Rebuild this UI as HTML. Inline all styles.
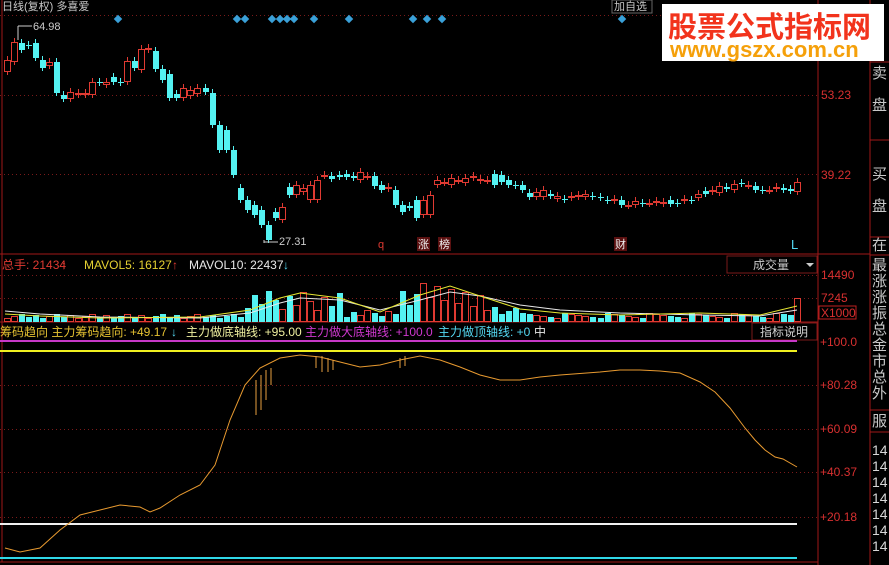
<!DOCTYPE html>
<html><head><meta charset="utf-8"><style>
html,body{margin:0;padding:0;background:#000;width:889px;height:565px;overflow:hidden}
body{font-family:"Liberation Sans","Noto Sans CJK SC",sans-serif}
svg{position:absolute;left:0;top:0}
.t{font-family:"Liberation Sans","Noto Sans CJK SC",sans-serif;font-size:12px}
#logo{position:absolute;left:662px;top:4px;width:222px;height:57px;background:#fff}
#logo .a{position:absolute;left:6px;top:0;font:bold 29px "Noto Sans CJK SC",sans-serif;color:#f2331c;letter-spacing:0px;white-space:nowrap}
#logo .b{position:absolute;left:8px;top:33px;font:bold 22px "Liberation Sans",sans-serif;color:#f5a00a;white-space:nowrap}
</style></head><body>
<svg id="s" width="889" height="565" xmlns="http://www.w3.org/2000/svg"></svg>
<div id="logo"><div class="a">股票公式指标网</div><div class="b">www.gszx.com.cn</div></div>
<script>
var s=document.getElementById('s'),h='';
function L(x1,y1,x2,y2,c,w,d){h+='<line x1="'+x1+'" y1="'+y1+'" x2="'+x2+'" y2="'+y2+'" stroke="'+c+'" stroke-width="'+(w||1)+'"'+(d?' stroke-dasharray="'+d+'"':'')+'/>';}
function T(x,y,t,c,sz,a){h+='<text x="'+x+'" y="'+y+'" fill="'+c+'" class="t" style="font-size:'+(sz||12)+'px"'+(a?' text-anchor="'+a+'"':'')+'>'+t+'</text>';}
function R(x,y,w,hh,f,st){h+='<rect x="'+x+'" y="'+y+'" width="'+w+'" height="'+hh+'" fill="'+f+'"'+(st?' stroke="'+st+'"':'')+'/>';}
var red='#c8302a';
// frame lines
L(818,0,818,565,'#a01818');L(870,0,870,565,'#a01818');
L(0,254,870,254,'#a01818');L(0,322,818,322,'#a01818');L(0,562,818,562,'#a01818');L(2,0,2,562,'#a01818');
L(870,62,889,62,'#a01818');L(870,140,889,140,'#a01818');L(870,237,889,237,'#a01818');L(870,255,889,255,'#a01818');L(870,410,889,410,'#a01818');L(870,432,889,432,'#a01818');
// grid dotted
[15,95,174].forEach(function(y){L(0,y+.5,818,y+.5,'#7a1a1a',1,'1,3');});
[275,298].forEach(function(y){L(0,y+.5,818,y+.5,'#7a1a1a',1,'1,3');});
[385,429,472,517].forEach(function(y){L(0,y+.5,818,y+.5,'#7a1a1a',1,'1,3');});
// header
T(2,10,'日线(复权) 多喜爱','#c8c8c8',11);
R(612,0,40,13,'#000','#666');T(614,10,'加自选','#c8c8c8',11);
// diamonds
[118,237,245,272,280,287,294,314,349,413,427,442,622].forEach(function(x){h+='<rect x="'+(x-3)+'" y="16" width="6" height="6" fill="#3aa0d8" transform="rotate(45 '+x+' 19)"/>';});
// candles [top,bottom,type]
var c=[[60,72,'r'],[42,62,'r'],[43,50,'c'],[45,46,'c'],[43,58,'c'],[60,68,'c'],[62,66,'r'],[62,93,'c'],[95,99,'c'],[92,99,'r'],[93,95,'r'],[93,95,'r'],[82,95,'r'],[82,83,'c'],[82,85,'r'],[77,82,'c'],[82,83,'c'],[61,82,'r'],[61,68,'c'],[49,70,'r'],[48,50,'r'],[51,69,'c'],[69,80,'c'],[74,98,'c'],[94,98,'c'],[88,98,'r'],[90,96,'r'],[88,94,'r'],[88,92,'c'],[93,125,'c'],[125,150,'c'],[130,150,'c'],[150,175,'c'],[188,200,'c'],[200,210,'c'],[205,215,'c'],[210,225,'c'],[225,240,'c'],[212,218,'c'],[207,220,'r'],[187,195,'c'],[185,195,'r'],[188,192,'r'],[185,200,'r'],[180,200,'r'],[175,176,'r'],[176,179,'c'],[175,177,'c'],[174,177,'c'],[176,178,'c'],[172,180,'r'],[176,177,'r'],[176,186,'c'],[185,190,'c'],[187,189,'r'],[190,205,'c'],[205,212,'c'],[206,208,'c'],[200,218,'c'],[200,215,'r'],[195,215,'r'],[180,185,'r'],[182,183,'r'],[178,185,'r'],[180,181,'r'],[178,183,'r'],[176,178,'r'],[179,181,'r'],[180,181,'r'],[174,185,'c'],[175,182,'c'],[180,185,'c'],[185,186,'c'],[185,190,'c'],[193,197,'c'],[192,197,'r'],[190,197,'r'],[194,196,'c'],[196,199,'r'],[199,200,'c'],[196,198,'r'],[195,197,'r'],[194,197,'r'],[196,197,'c'],[197,198,'c'],[200,201,'c'],[199,201,'r'],[200,205,'c'],[205,206,'r'],[201,205,'r'],[203,204,'c'],[203,204,'r'],[201,203,'r'],[202,204,'r'],[200,204,'c'],[203,204,'c'],[199,201,'r'],[200,201,'c'],[194,198,'r'],[191,194,'c'],[190,192,'r'],[186,193,'r'],[187,189,'c'],[184,190,'r'],[183,184,'c'],[185,186,'r'],[186,190,'c'],[190,191,'c'],[190,191,'r'],[187,189,'r'],[188,190,'c'],[189,191,'c'],[182,192,'r']];
var n=c.length,dx=(797-7)/(n-1);
c.forEach(function(d,i){var x=Math.round(7+i*dx),col=d[2]=='r'?'#e03a32':'#54f2f2';
L(x+.5,d[0]-4,x+.5,d[1]+3,col);
if(d[2]=='r'){R(x-2.5,d[0]+.5,6,Math.max(1,d[1]-d[0]-1),'#000',col);}else{R(x-2,d[0],6,Math.max(1,d[1]-d[0]),col);}
// volume
var v;var xx=7+i*dx;
if(xx<240)v=4+((i*7)%5);else if(xx<340)v=12+((i*13)%22);else if(xx<400)v=5+((i*5)%8);else if(xx<480)v=15+((i*11)%25);else if(xx<520)v=8+((i*3)%10);else v=4+((i*5)%6);
if(i==n-1)v=24;
var vc=d[2]=='r'?'#e03a32':'#54f2f2';
if(d[2]=='r')R(x-2.5,322-v+.5,6,v-1,'#000',vc);else R(x-2,322-v,6,v,vc);
});
// MA lines on volume
h+='<polyline fill="none" stroke="#e8e8e8" points="5,311 40,314 100,317 200,318 250,313 280,303 300,298 340,300 380,310 420,300 450,292 480,296 520,305 560,310 620,313 700,315 760,316 797,310"/>';
h+='<polyline fill="none" stroke="#e6e632" points="5,314 40,316 100,318 200,317 250,310 280,298 300,293 340,298 380,312 420,295 450,286 480,296 520,309 560,313 620,315 700,313 760,315 797,306"/>';
// high/low labels
L(18,26,18,40,'#ccc');L(18,26,32,26,'#ccc');T(33,30,'64.98','#ccc',11);
L(264,240,264,243,'#ccc');L(264,242,278,242,'#ccc');T(279,245,'27.31','#ccc',11);
// markers
T(378,248,'q','#e03a32',11);R(417,237,13,14,'#5a1010');T(418,248,'涨','#f0f0f0',11);R(438,237,13,14,'#5a1010');T(439,248,'榜','#f0f0f0',11);R(614,237,13,14,'#5a1010');T(615,248,'财','#f0f0f0',11);T(791,249,'L','#54d8f2',13);
// axis labels
T(821,99,'53.23','#d83030');T(821,179,'39.22','#d83030');
T(821,279,'14490','#d83030');T(821,302,'7245','#d83030');R(819,306,37,13,'none','#c02020');T(821,317,'X1000','#d83030');
[['+100.0',346],['+80.28',389],['+60.09',433],['+40.37',476],['+20.18',521]].forEach(function(a){T(820,a[1],a[0],'#d83030');});
// volume header
T(2,269,'总手: 21434','#e03a32');T(61,269,'↑','#e03a32');T(84,269,'MAVOL5: 16127','#e6d232');T(172,269,'↑','#e03a32');T(189,269,'MAVOL10: 22437','#e8e8e8');T(283,269,'↓','#54d8f2');
R(727,256,90,17,'#000','#7a1a1a');T(753,269,'成交量','#c8c8c8');h+='<path d="M806 263 L814 263 L810 267Z" fill="#ccc"/>';
// indicator header
T(0,336,'筹码趋向 主力筹码趋向: +49.17','#e6c232');T(171,336,'↓','#54d8f2');T(186,336,'主力做底轴线: +95.00','#f0f0a0');T(305,336,'主力做大底轴线: +100.0','#d038d0');T(438,336,'主力做顶轴线: +0','#54d8f2');T(534,336,'中','#e8e8e8');
R(752,323,65,17,'#000','#7a1a1a');T(760,336,'指标说明','#d0d0d0');
// indicator lines
L(0,341,797,341,'#c838c8',2);L(0,351,797,351,'#f0f020',2);L(0,524,797,524,'#f0f0f0',2);L(0,558,797,558,'#30d8e8',2);
h+='<polyline fill="none" stroke="#e89a30" points="5,548 20,552 40,548 60,530 80,515 100,510 120,505 140,507 150,512 160,508 180,495 200,485 215,465 230,420 245,385 260,368 280,358 300,355 320,357 340,362 360,367 380,365 400,360 420,356 440,360 460,367 480,375 500,380 520,380 540,377 560,375 600,372 620,370 640,370 660,371 680,373 700,382 715,392 730,408 745,428 755,440 765,450 775,457 783,459 797,467"/>';
[[256,380,415],[261,375,410],[266,370,400],[271,368,385],[316,356,368],[322,356,372],[328,358,372],[333,360,370],[400,358,368],[405,356,366]].forEach(function(a){L(a[0],a[1],a[0],a[2],'#e8a040');});
// right panel text
[['卖',78],['盘',110],['买',179],['盘',211],['在',250],['最',270],['涨',286],['涨',302],['振',318],['总',334],['金',350],['市',366],['总',382],['外',398],['服',426]].forEach(function(a){T(872,a[1],a[0],'#c8c8c8',15);});
for(var k=0;k<7;k++)T(872,455+k*16,'14','#d8d8d8',14);
s.innerHTML=h;
</script>
</body></html>
